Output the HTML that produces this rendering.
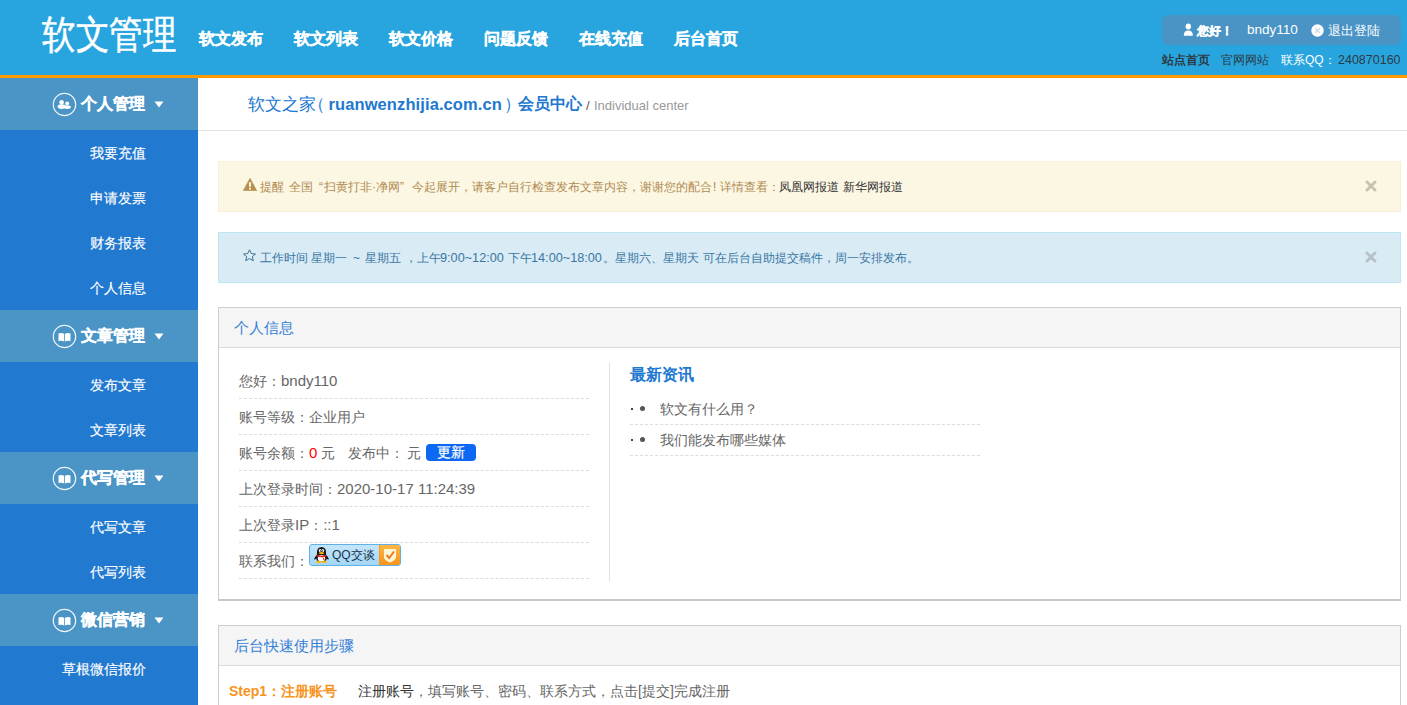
<!DOCTYPE html>
<html><head><meta charset="utf-8">
<style>
*{margin:0;padding:0;box-sizing:border-box}
html,body{width:1407px;height:705px;overflow:hidden;background:#fff;font-family:"Liberation Sans",sans-serif;}
.a{position:absolute;white-space:nowrap}
#top{position:absolute;left:0;top:0;width:1407px;height:75px;background:#28a5de}
#obar{position:absolute;left:0;top:75px;width:1407px;height:3px;background:#ff9a00}
#logo{left:41.5px;top:7.5px;font-size:39px;color:#fff;line-height:54px;transform-origin:0 0;transform:scaleX(0.86);-webkit-text-stroke:0.5px #fff}
.nav{top:26.5px;font-size:16px;margin-left:-0.5px;font-weight:bold;color:#fff;line-height:24px;-webkit-text-stroke:0.35px #fff}
#ubox{position:absolute;left:1162px;top:15px;width:239px;height:30px;background:#4993c5;border-radius:6px}
.ut{font-size:13px;color:#fff;line-height:18px;top:21px}
.r2{font-size:12px;line-height:16px;top:52px;color:#2d3a45}
#side{position:absolute;left:0;top:78px;width:198px;height:627px;background:#2179d0}
.sh{position:absolute;left:0;width:198px;height:52px;background:#4a94c6}
.sh .t{position:absolute;left:81px;top:15px;font-size:16px;font-weight:bold;color:#fff;line-height:22px;-webkit-text-stroke:0.3px #fff}
.sh svg{position:absolute;left:52px;top:14px}
.sh svg.car{position:absolute;left:154px;top:23px}
.si{position:absolute;left:0;width:198px;height:45px;color:#fff;font-size:14px;line-height:46px;text-align:right;padding-right:52px;-webkit-text-stroke:0.15px #fff}
#hr1{position:absolute;left:198px;top:130px;width:1209px;height:1px;background:#e3e3e3}
.alert{position:absolute;left:218px;width:1183px;height:51px}
.warn{top:161px;background:#fcf7e3;border:1px solid #f9efd6}
.info{top:232px;background:#d9ebf5;border:1px solid #bce6f0}
.at{font-size:12px;line-height:16px;top:179px}
.bt{font-size:12px;line-height:16px;top:250px}
.l{font-size:12.7px}
.close{position:absolute;left:1146px;top:18px;}
.panel{position:absolute;left:218px;width:1183px;border:1px solid #cdcdcd;background:#fff}
.ph{position:absolute;left:0;top:0;width:100%;height:40px;background:#f5f5f5;border-bottom:1px solid #dcdcdc}
.pt{font-size:15px;color:#3581d6;line-height:20px}
.row{position:absolute;left:239px;width:350px;height:36px;border-bottom:1px dashed #dcdcdc}
.rt{font-size:14px;color:#666;line-height:20px}
.L{font-size:15px}
.dl{position:absolute;left:630px;width:350px;height:31px;border-bottom:1px dashed #dcdcdc}
</style></head><body>
<div id="top"></div>
<div id="obar"></div>
<div id="logo" class="a">软文管理</div>
<div class="a nav" style="left:199px">软文发布</div>
<div class="a nav" style="left:294px">软文列表</div>
<div class="a nav" style="left:389px">软文价格</div>
<div class="a nav" style="left:484px">问题反馈</div>
<div class="a nav" style="left:579px">在线充值</div>
<div class="a nav" style="left:674px">后台首页</div>

<div id="ubox"></div>
<svg class="a" style="left:1183px;top:23px" width="11" height="14" viewBox="0 0 11 14"><ellipse cx="5.3" cy="3.5" rx="2.7" ry="2.9" fill="#fff"/><path d="M0.8 12.8 C0.6 9.5 2.2 7.4 5.3 7.4 C8.4 7.4 10 9.5 9.8 12.8 Z" fill="#fff"/></svg>
<div class="a ut" style="left:1197px;top:22px;font-size:12px;font-weight:bold;-webkit-text-stroke:0.3px #fff">您好！</div>
<div class="a ut" style="left:1247px;font-size:13.5px">bndy110</div>
<svg class="a" style="left:1311px;top:24px" width="13" height="13" viewBox="0 0 13 13"><circle cx="6.5" cy="6.5" r="6.2" fill="#fff"/><path d="M4.2 4.2 L8.8 8.8 M8.8 4.2 L4.2 8.8" stroke="#c9dbe8" stroke-width="1.3"/></svg>
<div class="a ut" style="left:1328px;top:22px;font-size:12.5px">退出登陆</div>
<div class="a r2" style="left:1162px;font-weight:bold">站点首页</div>
<div class="a r2" style="left:1221px">官网网站</div>
<div class="a r2" style="left:1281px;color:#fff">联系QQ：</div>
<div class="a r2" style="left:1338px;font-size:12.5px">240870160</div>

<div id="side">
 <div class="sh" style="top:0"><svg width="25" height="25" viewBox="0 0 25 25"><circle cx="12.5" cy="12.5" r="11.2" fill="none" stroke="#eef6fb" stroke-width="1.2"/><g fill="#fff"><circle cx="9.6" cy="10.2" r="2.3"/><circle cx="15.2" cy="11.6" r="2"/><ellipse cx="9.6" cy="14.6" rx="3.9" ry="2.3"/><ellipse cx="15.3" cy="15.1" rx="3.6" ry="1.9"/></g></svg><div class="t">个人管理</div><svg class="car" width="10" height="7" viewBox="0 0 10 7"><path d="M0.5 0.5 L9.5 0.5 L5 6.5 Z" fill="#fff"/></svg></div>
 <div class="si" style="top:52px">我要充值</div>
 <div class="si" style="top:97px">申请发票</div>
 <div class="si" style="top:142px">财务报表</div>
 <div class="si" style="top:187px">个人信息</div>
 <div class="sh" style="top:232px"><svg width="25" height="25" viewBox="0 0 25 25"><circle cx="12.5" cy="12.5" r="11.2" fill="none" stroke="#eef6fb" stroke-width="1.2"/><path fill="#fff" d="M6.5 9.6 C8 8.7 10.2 8.8 12.1 9.7 L12.1 17.4 C10.3 16.6 8.2 16.5 6.5 17.2 Z M12.9 9.7 C14.8 8.8 17 8.7 18.5 9.6 L18.5 17.2 C16.8 16.5 14.7 16.6 12.9 17.4 Z"/></svg><div class="t">文章管理</div><svg class="car" width="10" height="7" viewBox="0 0 10 7"><path d="M0.5 0.5 L9.5 0.5 L5 6.5 Z" fill="#fff"/></svg></div>
 <div class="si" style="top:284px">发布文章</div>
 <div class="si" style="top:329px">文章列表</div>
 <div class="sh" style="top:374px"><svg width="25" height="25" viewBox="0 0 25 25"><circle cx="12.5" cy="12.5" r="11.2" fill="none" stroke="#eef6fb" stroke-width="1.2"/><path fill="#fff" d="M6.5 9.6 C8 8.7 10.2 8.8 12.1 9.7 L12.1 17.4 C10.3 16.6 8.2 16.5 6.5 17.2 Z M12.9 9.7 C14.8 8.8 17 8.7 18.5 9.6 L18.5 17.2 C16.8 16.5 14.7 16.6 12.9 17.4 Z"/></svg><div class="t">代写管理</div><svg class="car" width="10" height="7" viewBox="0 0 10 7"><path d="M0.5 0.5 L9.5 0.5 L5 6.5 Z" fill="#fff"/></svg></div>
 <div class="si" style="top:426px">代写文章</div>
 <div class="si" style="top:471px">代写列表</div>
 <div class="sh" style="top:516px"><svg width="25" height="25" viewBox="0 0 25 25"><circle cx="12.5" cy="12.5" r="11.2" fill="none" stroke="#eef6fb" stroke-width="1.2"/><path fill="#fff" d="M6.5 9.6 C8 8.7 10.2 8.8 12.1 9.7 L12.1 17.4 C10.3 16.6 8.2 16.5 6.5 17.2 Z M12.9 9.7 C14.8 8.8 17 8.7 18.5 9.6 L18.5 17.2 C16.8 16.5 14.7 16.6 12.9 17.4 Z"/></svg><div class="t">微信营销</div><svg class="car" width="10" height="7" viewBox="0 0 10 7"><path d="M0.5 0.5 L9.5 0.5 L5 6.5 Z" fill="#fff"/></svg></div>
 <div class="si" style="top:568px">草根微信报价</div>
</div>

<div class="a" style="left:248px;top:93px;font-size:16.5px;color:#2178d1;line-height:22px">软文之家</div>
<div class="a" style="left:308px;top:93px;font-size:16.5px;color:#2178d1;line-height:22px">（</div>
<div class="a" style="left:328.5px;top:93px;font-size:16.5px;color:#2178d1;line-height:22px;font-weight:bold;letter-spacing:0.1px">ruanwenzhijia.com.cn</div>
<div class="a" style="left:504px;top:93px;font-size:16.5px;color:#2178d1;line-height:22px">）</div>
<div class="a" style="left:518px;top:93px;font-size:16px;color:#2178d1;line-height:22px;font-weight:bold">会员中心</div>
<div class="a" style="left:586px;top:97px;font-size:13px;color:#555;line-height:18px">/</div>
<div class="a" style="left:594px;top:97px;font-size:13px;color:#999;line-height:18px">Individual center</div>
<div id="hr1"></div>

<div class="alert warn"><svg class="close" width="12" height="12" viewBox="0 0 12 12"><path d="M2 2 L10 10 M10 2 L2 10" stroke="#c9c2b1" stroke-width="2.9" stroke-linecap="round"/></svg></div>
<svg class="a" style="left:243px;top:178px" width="14" height="13" viewBox="0 0 14 13"><path d="M7 0.3 L13.8 12.8 L0.2 12.8 Z" fill="#b8914f" stroke="#b8914f" stroke-width="0.6" stroke-linejoin="round"/><rect x="6" y="4.2" width="2" height="4.6" fill="#fcf6e4"/><rect x="6" y="9.8" width="2" height="1.8" fill="#fcf6e4"/></svg>
<div class="a at" style="left:260px;color:#b08a52">提醒</div>
<div class="a at" style="left:289px;color:#b08a52">全国</div>
<div class="a at" style="left:319px;color:#b08a52">“</div>
<div class="a at" style="left:324px;color:#b08a52">扫黄打非·净网</div>
<div class="a at" style="left:400px;color:#b08a52">”</div>
<div class="a at" style="left:412px;color:#b08a52">今起展开，请客户自行检查发布文章内容，谢谢您的配合</div>
<div class="a at" style="left:713px;color:#b08a52">!</div>
<div class="a at" style="left:720px;color:#b08a52">详情查看：</div>
<div class="a at" style="left:779px;color:#333">凤凰网报道</div>
<div class="a at" style="left:843px;color:#333">新华网报道</div>

<div class="alert info"><svg class="close" width="12" height="12" viewBox="0 0 12 12"><path d="M2 2 L10 10 M10 2 L2 10" stroke="#b7c2c8" stroke-width="2.9" stroke-linecap="round"/></svg></div>
<svg class="a" style="left:243px;top:249px" width="13" height="13" viewBox="0 0 13 13"><path d="M6.5 0.8 L8.3 4.6 L12.5 5 L9.3 7.7 L10.3 11.7 L6.5 9.6 L2.7 11.7 L3.7 7.7 L0.5 5 L4.7 4.6 Z" fill="none" stroke="#41718f" stroke-width="1" stroke-linejoin="round"/></svg>
<div class="a bt" style="left:260px;color:#3a77a3">工作时间 星期一</div>
<div class="a bt" style="left:353px;color:#3a77a3">~</div>
<div class="a bt" style="left:365px;color:#3a77a3">星期五</div>
<div class="a bt" style="left:405px;color:#3a77a3">，上午</div>
<div class="a bt l" style="left:440px;color:#3a77a3">9:00~12:00</div>
<div class="a bt" style="left:508px;color:#3a77a3">下午</div>
<div class="a bt l" style="left:531px;color:#3a77a3">14:00~18:00</div>
<div class="a bt" style="left:603px;color:#3a77a3">。星期六、星期天</div>
<div class="a bt" style="left:703px;color:#3a77a3">可在后台自助提交稿件，周一安排发布。</div>

<div class="panel" style="top:307px;height:294px;border-bottom:2px solid #c8c8c8"><div class="ph"></div></div>
<div class="a pt" style="left:234px;top:318px">个人信息</div>
<div class="panel" style="top:625px;height:100px"><div class="ph"></div></div>
<div class="a pt" style="left:234px;top:636px">后台快速使用步骤</div>

<div class="row" style="top:363px"></div>
<div class="row" style="top:399px"></div>
<div class="row" style="top:435px"></div>
<div class="row" style="top:471px"></div>
<div class="row" style="top:507px"></div>
<div class="row" style="top:543px"></div>
<div style="position:absolute;left:609px;top:362px;width:1px;height:220px;background:#e3e3e3"></div>

<div class="a rt" style="left:239px;top:371px">您好：<span class="L">bndy110</span></div>
<div class="a rt" style="left:239px;top:407px">账号等级：企业用户</div>
<div class="a rt" style="left:239px;top:443px">账号余额：<span class="L" style="color:#f00">0</span></div>
<div class="a rt" style="left:321px;top:443px">元</div>
<div class="a rt" style="left:348px;top:443px">发布中：</div>
<div class="a rt" style="left:407px;top:443px">元</div>
<div class="a" style="left:426px;top:444px;width:50px;height:17px;background:#0c68f2;border-radius:4px;color:#fff;font-size:14px;line-height:17px;text-align:center;-webkit-text-stroke:0.2px #fff">更新</div>
<div class="a rt" style="left:239px;top:479px">上次登录时间：<span class="L">2020-10-17 11:24:39</span></div>
<div class="a rt" style="left:239px;top:515px">上次登录<span class="L">IP</span>：<span class="L">::1</span></div>
<div class="a rt" style="left:239px;top:551px">联系我们：</div>

<div class="a" style="left:309px;top:544px;width:92px;height:22px;border-radius:3px;overflow:hidden;border:1px solid #5fb0e8;background:linear-gradient(#c4e6fb,#a3d6f6)">
 <div class="a" style="left:69px;top:-1px;width:22px;height:22px;background:linear-gradient(#ffb640,#f7941d);border:1px solid #f39a21"></div>
</div>
<svg class="a" style="left:313px;top:546px" width="17" height="17" viewBox="0 0 17 17"><path d="M8.5 1 C11.5 1 13 3.2 13 6 C13 7.5 12.8 8.3 13.3 9.3 C14.6 10.5 16 12.2 15.6 13.6 C15.2 14 14.4 13.2 13.8 12.6 C13.5 14.8 11.5 16 8.5 16 C5.5 16 3.5 14.8 3.2 12.6 C2.6 13.2 1.8 14 1.4 13.6 C1 12.2 2.4 10.5 3.7 9.3 C4.2 8.3 4 7.5 4 6 C4 3.2 5.5 1 8.5 1 Z" fill="#151515"/><ellipse cx="8.5" cy="12.3" rx="3.7" ry="3.4" fill="#fff"/><ellipse cx="7.1" cy="4.6" rx="1.3" ry="1.6" fill="#fff"/><ellipse cx="9.9" cy="4.6" rx="1.3" ry="1.6" fill="#fff"/><circle cx="7.4" cy="4.9" r="0.6" fill="#111"/><circle cx="9.6" cy="4.9" r="0.6" fill="#111"/><ellipse cx="8.5" cy="7.2" rx="2.6" ry="1.1" fill="#f7b500"/><path d="M3.6 8.7 Q8.5 10.6 13.4 8.7 L13.6 10.3 Q8.5 12.3 3.4 10.3 Z" fill="#e3261c"/><path d="M9.5 10.5 L11.8 13.6 L10.3 13.9 Z" fill="#e3261c"/><ellipse cx="5.6" cy="15.9" rx="2.6" ry="1.1" fill="#f7b500"/><ellipse cx="11.4" cy="15.9" rx="2.6" ry="1.1" fill="#f7b500"/></svg>
<div class="a" style="left:332px;top:547px;font-size:12px;line-height:16px;color:#16324a">QQ交谈</div>
<svg class="a" style="left:383px;top:548px" width="14" height="15" viewBox="0 0 14 15"><path d="M1 1 L13 1 L13 9 Q13 12 7 14.5 Q1 12 1 9 Z" fill="#fff6d8"/><path d="M3.5 7 L6.3 10 L11 3.5" fill="none" stroke="#ef7a1a" stroke-width="2"/></svg>

<div class="a" style="left:630px;top:364px;font-size:16px;font-weight:bold;color:#2178d1;line-height:22px">最新资讯</div>
<div class="dl" style="top:394px"></div>
<div class="dl" style="top:425px"></div>
<div class="a" style="left:631px;top:408px;width:2px;height:2px;background:#444"></div>
<div class="a" style="left:640px;top:406px;width:5px;height:5px;border-radius:50%;background:#555"></div>
<div class="a rt" style="left:660px;top:399px">软文有什么用？</div>
<div class="a" style="left:631px;top:439px;width:2px;height:2px;background:#444"></div>
<div class="a" style="left:640px;top:437px;width:5px;height:5px;border-radius:50%;background:#555"></div>
<div class="a rt" style="left:660px;top:430px">我们能发布哪些媒体</div>

<div class="a" style="left:229px;top:681px;font-size:14px;line-height:20px;color:#f7941d;font-weight:bold">Step1：注册账号</div>
<div class="a rt" style="left:358px;top:681px;color:#333">注册账号</div>
<div class="a rt" style="left:414px;top:681px">，填写账号、密码、联系方式，点击[提交]完成注册</div>
</body></html>
